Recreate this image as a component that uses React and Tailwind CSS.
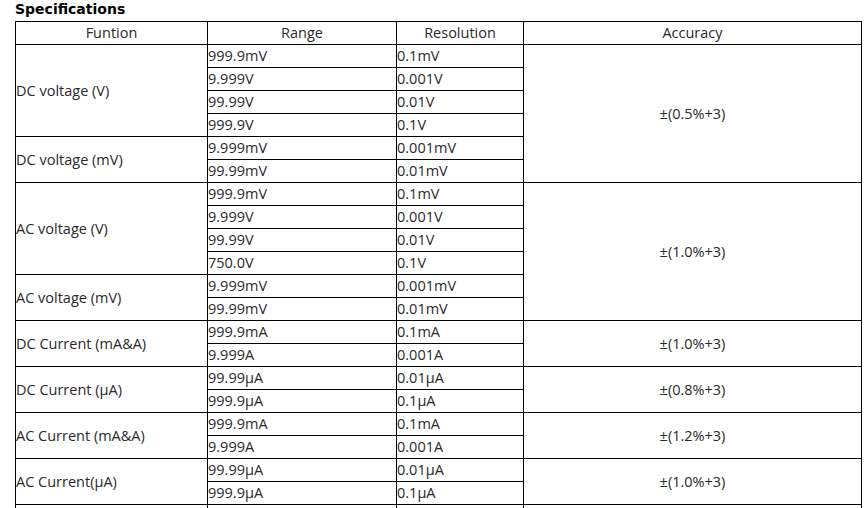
import React from "react";

const groups = [
  {
    name: "DC voltage (V)",
    rows: [
      ["999.9mV", "0.1mV"],
      ["9.999V", "0.001V"],
      ["99.99V", "0.01V"],
      ["999.9V", "0.1V"],
    ],
    accuracy: "±(0.5%+3)",
    accSpan: 6,
  },
  {
    name: "DC voltage (mV)",
    rows: [
      ["9.999mV", "0.001mV"],
      ["99.99mV", "0.01mV"],
    ],
  },
  {
    name: "AC voltage (V)",
    rows: [
      ["999.9mV", "0.1mV"],
      ["9.999V", "0.001V"],
      ["99.99V", "0.01V"],
      ["750.0V", "0.1V"],
    ],
    accuracy: "±(1.0%+3)",
    accSpan: 6,
  },
  {
    name: "AC voltage (mV)",
    rows: [
      ["9.999mV", "0.001mV"],
      ["99.99mV", "0.01mV"],
    ],
  },
  {
    name: "DC Current (mA&A)",
    rows: [
      ["999.9mA", "0.1mA"],
      ["9.999A", "0.001A"],
    ],
    accuracy: "±(1.0%+3)",
    accSpan: 2,
  },
  {
    name: "DC Current (µA)",
    rows: [
      ["99.99µA", "0.01µA"],
      ["999.9µA", "0.1µA"],
    ],
    accuracy: "±(0.8%+3)",
    accSpan: 2,
  },
  {
    name: "AC Current (mA&A)",
    rows: [
      ["999.9mA", "0.1mA"],
      ["9.999A", "0.001A"],
    ],
    accuracy: "±(1.2%+3)",
    accSpan: 2,
  },
  {
    name: "AC Current(µA)",
    rows: [
      ["99.99µA", "0.01µA"],
      ["999.9µA", "0.1µA"],
    ],
    accuracy: "±(1.0%+3)",
    accSpan: 2,
  },
];

const cell = "border border-black p-0 h-[23px] leading-[22px] whitespace-nowrap";

function App() {
  return (
    <div className="bg-white w-[865px] h-[508px] overflow-hidden pl-[15px] text-[#2a2a2a]">
      <div className="h-[21px] pt-[1px] text-[14px] leading-[17px] font-bold text-black font-['DejaVu_Sans',sans-serif]">
        Specifications
      </div>
      <table className="border-collapse table-fixed w-[846px] text-[14.5px] font-['Open_Sans',sans-serif]">
        <colgroup>
          <col className="w-[192px]" />
          <col className="w-[189px]" />
          <col className="w-[127px]" />
          <col className="w-[338px]" />
        </colgroup>
        <thead>
          <tr>
            <th className={`${cell} font-normal text-center`}>Funtion</th>
            <th className={`${cell} font-normal text-center`}>Range</th>
            <th className={`${cell} font-normal text-center`}>Resolution</th>
            <th className={`${cell} font-normal text-center`}>Accuracy</th>
          </tr>
        </thead>
        <tbody>
          {groups.map((g) =>
            g.rows.map((r, i) => (
              <tr key={g.name + i}>
                {i === 0 && (
                  <td rowSpan={g.rows.length} className={`${cell} align-middle text-left`}>
                    {g.name}
                  </td>
                )}
                <td className={cell}>{r[0]}</td>
                <td className={cell}>{r[1]}</td>
                {i === 0 && g.accuracy && (
                  <td rowSpan={g.accSpan} className={`${cell} align-middle text-center`}>
                    {g.accuracy}
                  </td>
                )}
              </tr>
            ))
          )}
          <tr>
            <td className={cell}></td>
            <td className={cell}></td>
            <td className={cell}></td>
            <td className={cell}></td>
          </tr>
        </tbody>
      </table>
    </div>
  );
}

export default App;
